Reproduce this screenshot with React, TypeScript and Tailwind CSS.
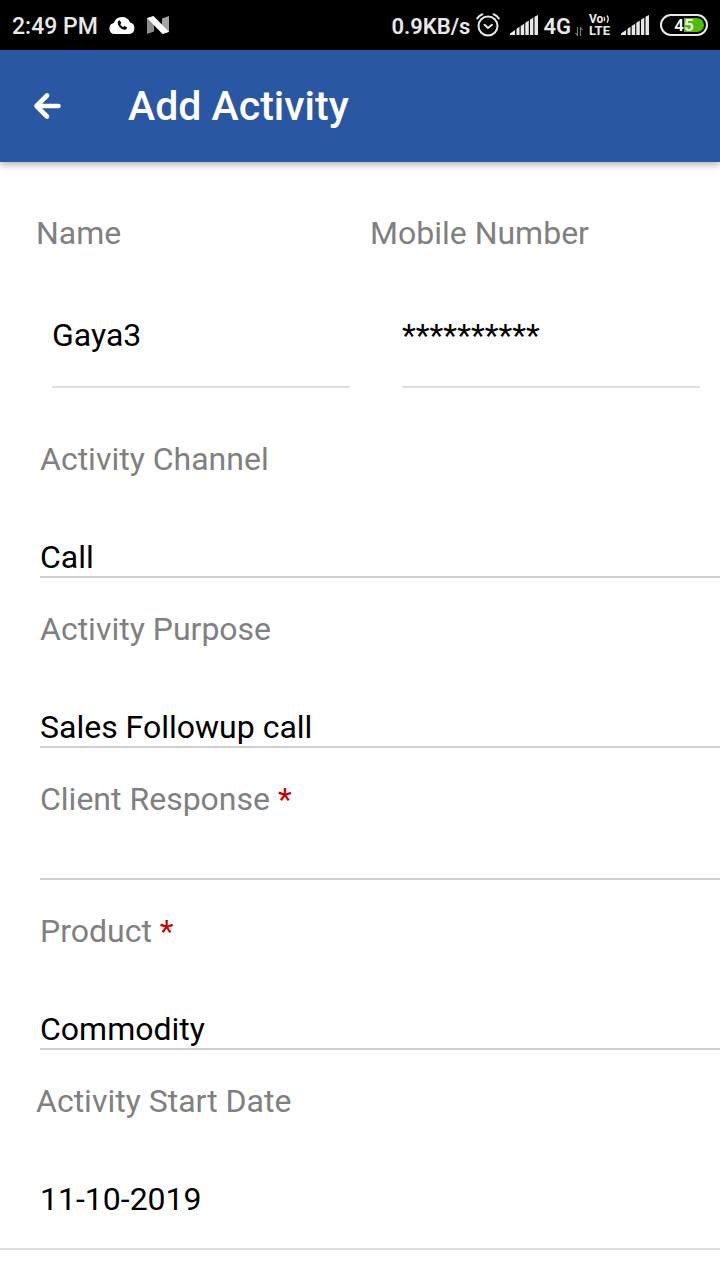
import { useState } from "react";
import type { ReactNode } from "react";

function CloudPhoneIcon() {
  return (
    <svg viewBox="0 0 26 18" className="h-[18px] w-[26px]" aria-hidden="true">
      <path
        d="M5.800 18a5.500 5.500 0 0 1-.9-10.900A8.500 8.500 0 0 1 21 6.600 5.800 5.800 0 0 1 20.200 18z"
        fill="#fff"
      />
      <path
        d="M9.300 5l1.500-.7 1.500 2.700-1 1.200c.6 1.300 1.500 2.200 2.900 2.800l1.300-1 2.700 1.500-.7 1.600c-.8 1.100-3 .9-4.900-.3-2.100-1.400-3.700-3.700-3.800-5.800 0-.9.100-1.500.5-2z"
        fill="#000"
      />
    </svg>
  );
}

function NougatIcon() {
  return (
    <svg viewBox="0 0 22 18" className="h-[18px] w-[22px]" aria-hidden="true">
      <path d="M0 2v16l7-2.500V3z" fill="#8c8c8c" />
      <path d="M15 2.500L22 0v16l-7 2z" fill="#a3a3a3" />
      <path d="M0 2L6.500 0 22 15.800 15.500 18z" fill="#fff" />
    </svg>
  );
}

function AlarmIcon() {
  return (
    <svg
      viewBox="0 0 24 24"
      className="size-6"
      fill="none"
      stroke="#e8e8e8"
      strokeWidth="2"
      strokeLinecap="round"
      aria-hidden="true"
    >
      <circle cx="12" cy="13" r="9.500" />
      <path d="M1.200 5.500Q3 2.500 6.300 1.200M22.800 5.500Q21 2.500 17.700 1.200" />
      <path d="M8.500 11.800L12 15l4-3.200" strokeLinejoin="round" />
    </svg>
  );
}

function SignalIcon() {
  return (
    <svg viewBox="0 0 28 20" className="h-5 w-7" fill="#e8e8e8" aria-hidden="true">
      <path d="M0 18.500L5 15V20H0zM6.500 13.700l3-2V20h-3zM10.700 11l3.500-2.200V20h-3.500zM15.300 7.800l3.500-2.300V20h-3.500zM20 4.700l3.300-2.200V20H20zM24.500 1.700L28 0v20h-3.500z" />
    </svg>
  );
}

function DataArrowsIcon() {
  return (
    <svg viewBox="0 0 8 9" className="h-[9px] w-2" fill="none" stroke="#777" strokeWidth="1.200" aria-hidden="true">
      <path d="M2.500 0v8.500L.5 6M5.500 9V.5l2 2.500" />
    </svg>
  );
}

function VoLte() {
  return (
    <div className="flex w-[21px] flex-col text-[12px] leading-3 font-bold">
      <span className="flex items-center">
        Vo
        <svg viewBox="0 0 7 8" className="h-2 w-[7px] shrink-0" fill="none" stroke="#e8e8e8" strokeWidth="1.300" aria-hidden="true">
          <path d="M1 2q1.300 2 0 4M4 .5q2.500 3.500 0 7" />
        </svg>
      </span>
      <span className="text-[13px]">LTE</span>
    </div>
  );
}

function Battery() {
  return (
    <div className="relative h-[22px] w-12 text-[17px] leading-[22px] font-semibold text-white">
      <svg viewBox="0 0 48 22" className="absolute inset-0 h-[22px] w-12" aria-hidden="true">
        <rect x="1" y="1" width="46" height="20" rx="10" fill="#000" stroke="#e8e8e8" strokeWidth="2" />
        <path d="M24 4h13a7 7 0 0 1 0 14H24z" fill="#4dbd0a" />
      </svg>
      <span className="relative block text-center">45</span>
    </div>
  );
}

function StatusBar() {
  return (
    <div className="flex h-[50px] items-center justify-between bg-black px-3 text-[#e8e8e8]">
      <div className="flex items-center text-[23px] leading-7 font-medium">
        <span className="pt-1">2:49 PM</span>
        <span className="ml-[11px] flex items-center gap-3">
          <CloudPhoneIcon />
          <NougatIcon />
        </span>
      </div>
      <div className="flex items-center text-[22px] leading-7 font-semibold">
        <span className="pt-1">0.9KB/s</span>
        <span className="ml-1.5 flex items-center gap-2.5">
          <AlarmIcon />
          <SignalIcon />
        </span>
        <span className="ml-[5px] pt-1">4G</span>
        <span className="mt-3 ml-1">
          <DataArrowsIcon />
        </span>
        <span className="ml-1.5 flex items-center gap-[11px]">
          <VoLte />
          <SignalIcon />
          <Battery />
        </span>
      </div>
    </div>
  );
}

const labelStyle = "block text-[32px] leading-[38px] text-[#808080]";
const controlStyle =
  "block w-full appearance-none rounded-none bg-transparent p-0 text-[32px] leading-[38px] text-black outline-none";

function Required() {
  return <span className="text-[#c80000]">*</span>;
}

function TextField(props: { id: string; label: string; value: string; labelClass: string }) {
  const [value, setValue] = useState(props.value);
  return (
    <div>
      <label htmlFor={props.id} className={`${labelStyle} ${props.labelClass}`}>
        {props.label}
      </label>
      <div className="mt-16 pl-8">
        <input
          id={props.id}
          type="text"
          value={value}
          onChange={(e) => setValue(e.target.value)}
          className={`${controlStyle} h-[72px] border-b-2 border-[#dedede] pb-8`}
        />
      </div>
    </div>
  );
}

function SelectField(props: { id: string; label: ReactNode; options: string[]; gapClass: string }) {
  return (
    <div className="pt-8 pl-10">
      <label htmlFor={props.id} className={labelStyle}>
        {props.label}
      </label>
      <div className={props.gapClass}>
        <select id={props.id} className={`${controlStyle} h-10 border-b-2 border-[#d0d0d0]`}>
          {props.options.map((option) => (
            <option key={option}>{option}</option>
          ))}
        </select>
      </div>
    </div>
  );
}

export default function App() {
  const [date, setDate] = useState("11-10-2019");
  return (
    <div className="min-h-screen bg-white font-['Roboto',sans-serif]">
      <StatusBar />
      <header className="flex h-28 items-center bg-[#2957a4] pl-8 text-white shadow-[0_2px_8px_rgba(0,0,0,0.35)]">
        <button type="button" aria-label="Back" className="flex h-14 w-8 items-center">
          <svg
            viewBox="0 0 32 32"
            className="size-8"
            fill="none"
            stroke="currentColor"
            strokeWidth="4.600"
            strokeLinecap="round"
            strokeLinejoin="round"
            aria-hidden="true"
          >
            <path d="M15 5.500L4.500 16 15 26.500M5 16h21.500" />
          </svg>
        </button>
        <h1 className="ml-16 text-[41px] leading-12 font-medium">Add Activity</h1>
      </header>
      <form className="pb-[30px]">
        <div className="grid grid-cols-2 gap-5 px-5 pt-[52px] pb-5">
          <TextField id="name" label="Name" value="Gaya3" labelClass="pl-4" />
          <TextField id="mobile" label="Mobile Number" value="**********" labelClass="" />
        </div>
        <SelectField id="channel" label="Activity Channel" options={["Call"]} gapClass="pt-[60px]" />
        <SelectField id="purpose" label="Activity Purpose" options={["Sales Followup call"]} gapClass="pt-[60px]" />
        <SelectField id="response" label={<>Client Response <Required /></>} options={[""]} gapClass="pt-[22px]" />
        <SelectField id="product" label={<>Product <Required /></>} options={["Commodity"]} gapClass="pt-[60px]" />
        <div className="border-b-2 border-[#dedede] pt-8 pb-[30px]">
          <label htmlFor="start-date" className={`${labelStyle} pl-9`}>
            Activity Start Date
          </label>
          <div className="pt-[60px] pl-10">
            <input
              id="start-date"
              type="text"
              value={date}
              onChange={(e) => setDate(e.target.value)}
              className={`${controlStyle} h-[38px]`}
            />
          </div>
        </div>
      </form>
    </div>
  );
}
